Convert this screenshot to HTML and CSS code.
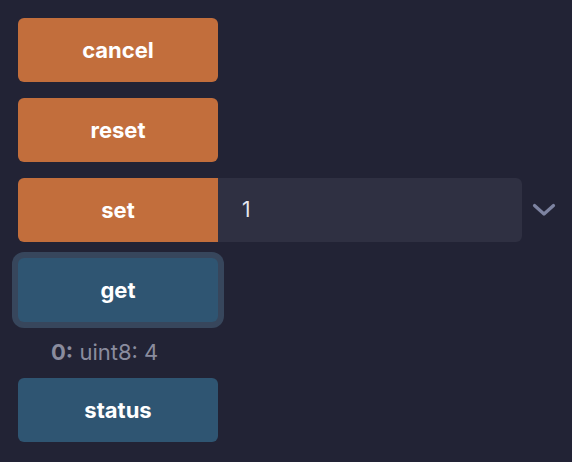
FILE: index.html
```html
<!DOCTYPE html>
<html>
<head>
<meta charset="utf-8">
<link rel="stylesheet" href="styles.css">
</head>
<body>
<div class="panel">
  <button class="btn orange">cancel</button>
  <button class="btn orange">reset</button>
  <div class="row">
    <button class="btn orange flat-right">set</button>
    <div class="input">1</div>
    <svg class="chev" width="24" height="14" viewBox="0 0 24 14"><path d="M2.5 2.5 L12 11 L21.5 2.5" fill="none" stroke="#7d83a1" stroke-width="3.2" stroke-linecap="round" stroke-linejoin="round"/></svg>
  </div>
  <button class="btn blue focus">get</button>
  <div class="result"><b>0:</b> uint8: 4</div>
  <button class="btn blue">status</button>
</div>
</body>
</html>
```
FILE: styles.css
```css
html, body {
  margin: 0;
  padding: 0;
  background: #222335;
  font-family: Inter, "Noto Sans", sans-serif;
}
.panel {
  display: flex;
  flex-direction: column;
  align-items: flex-start;
  gap: 16px;
  padding: 18px 0 0 18px;
}
.btn {
  width: 200px;
  height: 64px;
  border: none;
  border-radius: 6px;
  color: #ffffff;
  font-family: Inter, "Noto Sans", sans-serif;
  font-size: 22px;
  font-weight: 700;
  padding: 0;
  margin: 0;
}
.orange { background: #c26e3c; }
.blue { background: #2f5572; }
.focus { box-shadow: 0 0 0 6px #37465c; }
.flat-right { border-radius: 6px 0 0 6px; }
.row {
  display: flex;
  align-items: center;
}
.input {
  width: 280px;
  height: 64px;
  background: #2f3042;
  border-radius: 0 6px 6px 0;
  color: #e6e7ef;
  font-size: 21px;
  line-height: 64px;
  padding-left: 24px;
}
.chev {
  margin-left: 10px;
  display: block;
}
.result {
  color: #8a8c9e;
  font-size: 22px;
  padding-left: 33px;
  height: 24px;
  line-height: 24px;
  padding-top: 2px;
  box-sizing: border-box;
}
.result b { font-weight: 700; }
```
